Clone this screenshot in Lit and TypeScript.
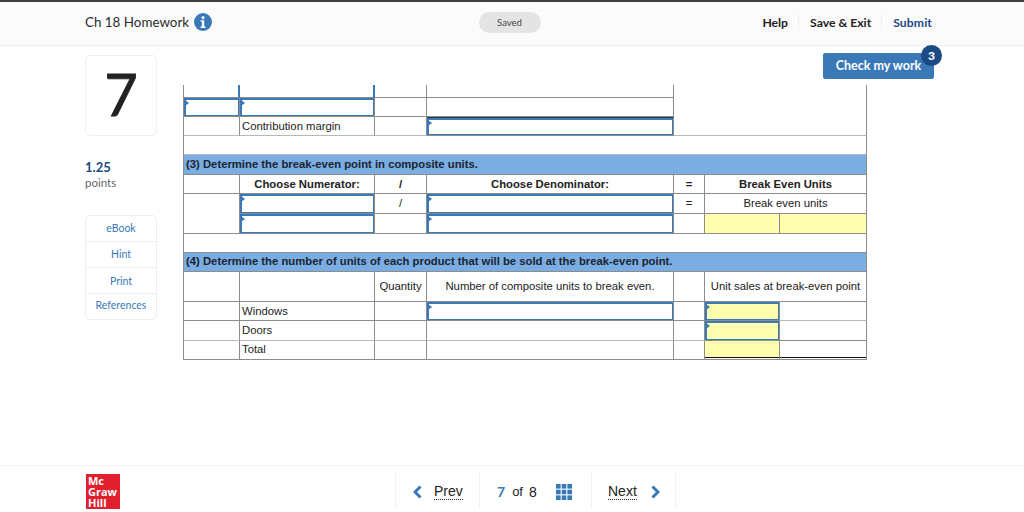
import { LitElement, html, css } from "lit";
import { customElement } from "lit/decorators.js";

@customElement("app-root")
export class AppRoot extends LitElement {
  static styles = css`
    :host { display: flex; flex-direction: column; width: 1024px; height: 512px; background: #fff; overflow: hidden; font-family: Lato, "Open Sans", sans-serif; color: #222; }
    * { box-sizing: border-box; }
    .topbar { height: 46px; flex: none; display: grid; grid-template-columns: 1fr auto 1fr; align-items: center; padding: 0 92px 3px 85px; background: #fbfbfb; border-top: 2px solid #3f3f45; border-bottom: 1px solid #eeeeee; }
    .title { display: flex; align-items: center; gap: 5px; font-size: 13.4px; color: #2b2b2b; }
    .saved { width: 62px; height: 21px; border-radius: 11px; background: #e4e4e4; font-size: 9.5px; display: flex; align-items: center; justify-content: center; color: #444; transform: translateX(1px); }
    .actions { display: flex; justify-content: flex-end; align-items: center; font-size: 12.2px; font-weight: 700; }
    .actions span { padding: 0 10px 0 11px; line-height: 17px; border-right: 1px solid #eeeeee; }
    .actions span:last-child { border-right: 0; padding-right: 0; color: #1b4a84; letter-spacing: 0.1px; }
    .main { flex: 1; display: flex; padding-left: 85px; min-height: 0; }
    .side { width: 72px; flex: none; display: flex; flex-direction: column; }
    .num { margin-top: 9px; height: 81px; padding-bottom: 4px; border: 1px solid #efefef; border-radius: 5px; display: flex; align-items: center; justify-content: center; font-size: 58px; line-height: 1; color: #222; -webkit-text-stroke: 0.8px #222; }
    .pts { margin-top: 24px; font-size: 13px; font-weight: 700; color: #1b4a84; line-height: 15px; }
    .ptl { font-size: 11.5px; color: #666; line-height: 15px; }
    .links { margin-top: 25px; border: 1px solid #eeeeee; border-radius: 5px; display: flex; flex-direction: column; font-size: 10.5px; color: #3b78b8; text-align: center; }
    .links div { height: 26px; line-height: 25px; border-bottom: 1px solid #eeeeee; }
    .links div:nth-child(3) { line-height: 27px; }
    .links div:last-child { border-bottom: 0; height: 25px; line-height: 23px; }
    .content { margin-left: 26px; width: 751px; display: flex; flex-direction: column; }
    .btnrow { height: 39px; padding-top: 7px; display: flex; justify-content: flex-end; }
    .btn { position: relative; width: 111px; height: 26px; padding-bottom: 2px; border-radius: 2px; background: #3b78b8; color: #fff; font-size: 12.5px; font-weight: 700; display: flex; align-items: center; justify-content: center; }
    .badge { position: absolute; right: -8px; top: -8px; width: 21px; height: 21px; border-radius: 50%; background: #1b4a84; color: #fff; font-size: 12px; font-weight: 900; display: flex; align-items: center; justify-content: center; }
    table { border-collapse: separate; border-spacing: 0; table-layout: fixed; width: 684px; border-left: 1px solid #8c8c8c; font-family: "Liberation Sans", Arial, sans-serif; font-size: 11.3px; color: #222; }
    td { padding: 0 0 0 2px; border-right: 1px solid #8c8c8c; border-bottom: 1px solid #8c8c8c; height: 19px; line-height: 13px; position: relative; white-space: nowrap; overflow: visible; }
    tr.h13 td { height: 13px; }
    tr.h20 td { height: 20px; }
    tr.h30 td { height: 30px; }
    td.c { text-align: center; padding-left: 0; }
    td.b { font-weight: 700; }
    td.head { background: #7aade2; font-weight: 700; padding-left: 2px; color: #1c2430; }
    td.up { padding-bottom: 1px; }
    td.lt { border-bottom-color: #b8b8b8; }
    td.y { background: #ffffaf; }
    td.bl { border-right: 2px solid #3b78b8; }
    td.inp { box-shadow: inset 0 0 0 1px #3b78b8, inset 1px 1px 0 1px #3b78b8; }
    td.inp::before { content: ""; position: absolute; left: 1px; top: 2px; border-left: 4px solid #3b78b8; border-top: 3px solid transparent; border-bottom: 3px solid transparent; }
    td.dk { border-top: 1px solid #333; }
    td.und { box-shadow: inset 0 -1px 0 #fff, inset 0 -2px 0 #111; }
    .footer { height: 47px; flex: none; display: flex; align-items: center; padding-left: 86px; border-top: 1px solid #f3f3f3; }
    .logo { width: 34px; height: 35px; background: #e21f2f; color: #fff; font-family: "Open Sans", sans-serif; font-weight: 700; font-size: 11px; line-height: 11.2px; padding: 1px 0 0 2px; margin-top: 5px; }
    .nav { margin-left: 275px; height: 38px; margin-top: 2px; display: flex; font-family: "Liberation Sans", Arial, sans-serif; font-size: 14px; color: #222; border-left: 1px solid #f0f0f0; }
    .nav > div { display: flex; align-items: center; padding-top: 3px; border-right: 1px solid #f0f0f0; }
    .prev { width: 84px; padding-left: 17px; gap: 12px; }
    .pager { width: 112px; padding-left: 17px; }
    .next { width: 84px; padding-left: 16px; gap: 14px; }
    .dot { border-bottom: 1px dotted #222; line-height: 15px; }
    .cur { color: #3b78b8; font-weight: 700; font-family: Lato, sans-serif; }
    .of { margin: 0 6px 0 7px; font-size: 13px; }
    .pager svg { margin-left: 19px; }
  `;

  render() {
    return html`
      <div class="topbar">
        <div class="title">Ch 18 Homework
          <svg width="18" height="18" viewBox="0 0 18 18"><circle cx="9" cy="9" r="9" fill="#3b78b8"/><circle cx="9" cy="4.600" r="1.600" fill="#fff"/><path d="M6.600 7.200h3.600v6.200h1.300v1.600H6.600v-1.600h1.300V8.800H6.600z" fill="#fff"/></svg>
        </div>
        <div class="saved">Saved</div>
        <div class="actions"><span>Help</span><span>Save &amp; Exit</span><span>Submit</span></div>
      </div>
      <div class="main">
        <div class="side">
          <div class="num">7</div>
          <div class="pts">1.25</div>
          <div class="ptl">points</div>
          <div class="links"><div>eBook</div><div>Hint</div><div>Print</div><div>References</div></div>
        </div>
        <div class="content">
          <div class="btnrow"><div class="btn">Check my work<div class="badge">3</div></div></div>
          <table>
            <colgroup><col style="width:56px"/><col style="width:135px"/><col style="width:52px"/><col style="width:247px"/><col style="width:31px"/><col style="width:75px"/><col style="width:87px"/></colgroup>
            <tr class="h13"><td class="bl"></td><td class="bl"></td><td></td><td></td><td colspan="3" rowspan="3" class="lt"></td></tr>
            <tr><td class="inp"></td><td class="inp"></td><td></td><td></td></tr>
            <tr><td class="lt"></td><td class="lt">Contribution margin</td><td class="lt"></td><td class="inp dk"></td></tr>
            <tr><td colspan="7" class="lt"></td></tr>
            <tr class="h20"><td colspan="7" class="head">(3) Determine the break-even point in composite units.</td></tr>
            <tr><td></td><td class="c b">Choose Numerator:</td><td class="c b">/</td><td class="c b">Choose Denominator:</td><td class="c b">=</td><td colspan="2" class="c b">Break Even Units</td></tr>
            <tr class="h20"><td rowspan="2"></td><td class="inp"></td><td class="c">/</td><td class="inp"></td><td class="c">=</td><td colspan="2" class="c">Break even units</td></tr>
            <tr class="h20"><td class="inp"></td><td></td><td class="inp"></td><td></td><td class="y"></td><td class="y"></td></tr>
            <tr><td colspan="7"></td></tr>
            <tr><td colspan="7" class="head up">(4) Determine the number of units of each product that will be sold at the break-even point.</td></tr>
            <tr class="h30"><td></td><td></td><td class="c">Quantity</td><td class="c">Number of composite units to break even.</td><td></td><td colspan="2" class="c">Unit sales at break-even point</td></tr>
            <tr><td></td><td>Windows</td><td></td><td class="inp"></td><td></td><td class="inp y"></td><td class="lt"></td></tr>
            <tr class="h20"><td class="lt"></td><td class="lt">Doors</td><td class="lt"></td><td class="lt"></td><td class="lt"></td><td class="inp y"></td><td></td></tr>
            <tr><td></td><td class="up">Total</td><td></td><td></td><td></td><td class="y und"></td><td class="und"></td></tr>
          </table>
        </div>
      </div>
      <div class="footer">
        <div class="logo">Mc<br/>Graw<br/>Hill</div>
        <div class="nav">
          <div class="prev">
            <svg width="9" height="14" viewBox="0 0 9 14"><path d="M7.500 1.500 2 7l5.500 5.500" fill="none" stroke="#3b78b8" stroke-width="3"/></svg>
            <span class="dot">Prev</span>
          </div>
          <div class="pager">
            <span class="cur">7</span><span class="of">of</span><span>8</span>
            <svg width="16" height="16" viewBox="0 0 16 16" fill="#3b78b8"><rect x="0" y="0" width="4.600" height="4.600"/><rect x="5.700" y="0" width="4.600" height="4.600"/><rect x="11.400" y="0" width="4.600" height="4.600"/><rect x="0" y="5.700" width="4.600" height="4.600"/><rect x="5.700" y="5.700" width="4.600" height="4.600"/><rect x="11.400" y="5.700" width="4.600" height="4.600"/><rect x="0" y="11.400" width="4.600" height="4.600"/><rect x="5.700" y="11.400" width="4.600" height="4.600"/><rect x="11.400" y="11.400" width="4.600" height="4.600"/></svg>
          </div>
          <div class="next">
            <span class="dot">Next</span>
            <svg width="9" height="14" viewBox="0 0 9 14"><path d="M1.500 1.500 7 7l-5.500 5.500" fill="none" stroke="#3b78b8" stroke-width="3"/></svg>
          </div>
        </div>
      </div>
    `;
  }
}
